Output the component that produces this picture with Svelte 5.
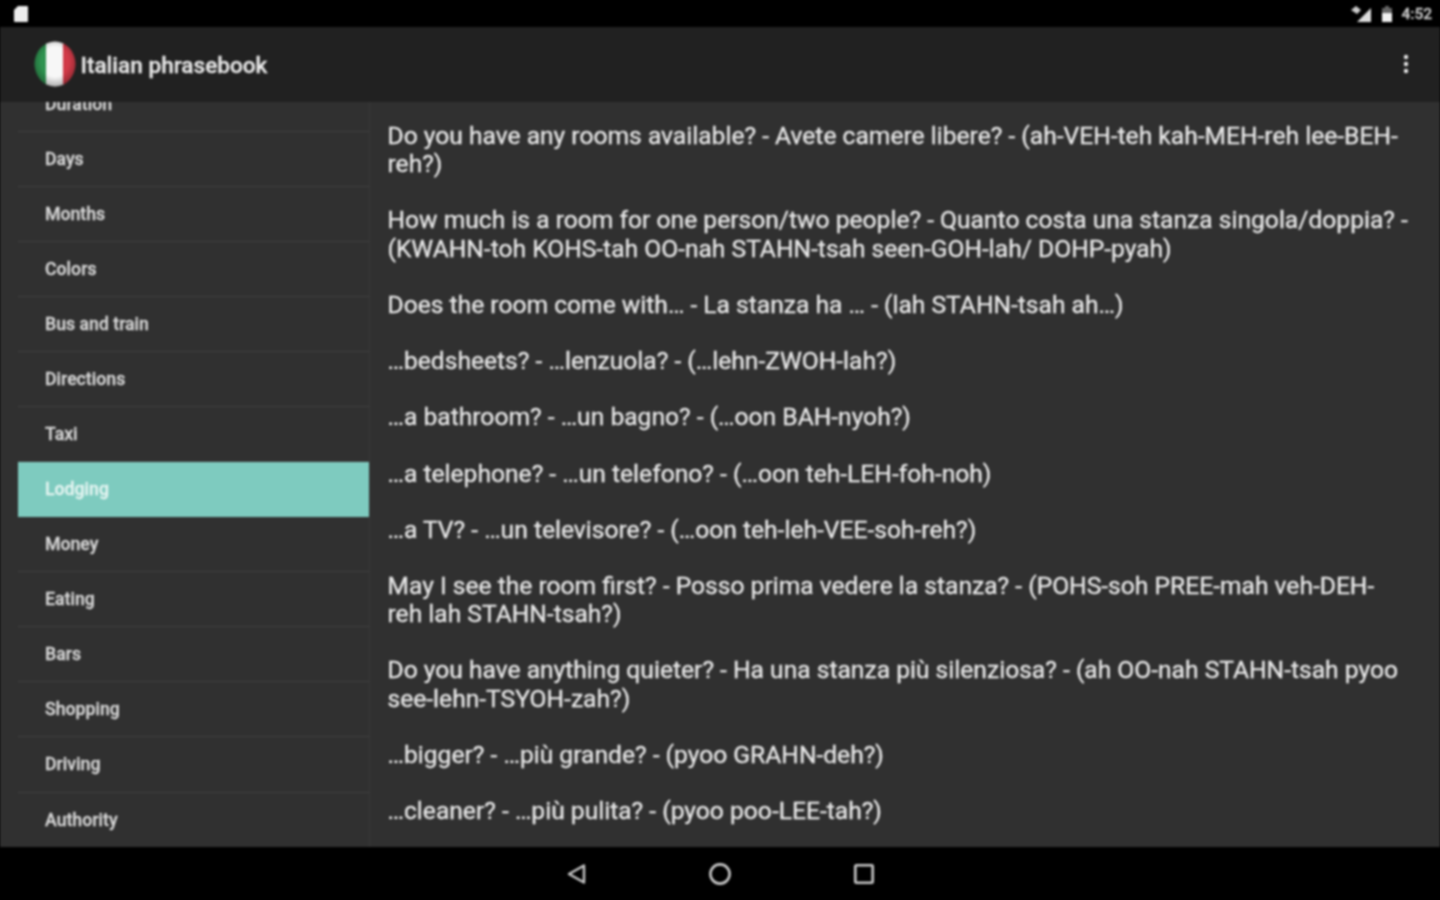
<script lang="ts">
  const topics = ["Duration", "Days", "Months", "Colors", "Bus and train", "Directions", "Taxi", "Lodging", "Money", "Eating", "Bars", "Shopping", "Driving", "Authority"];
  const selected = "Lodging";

  const phrases = [
    "Do you have any rooms available? - Avete camere libere? - (ah-VEH-teh kah-MEH-reh lee-BEH-reh?)",
    "How much is a room for one person/two people? - Quanto costa una stanza singola/doppia? - (KWAHN-toh KOHS-tah OO-nah STAHN-tsah seen-GOH-lah/ DOHP-pyah)",
    "Does the room come with… - La stanza ha … - (lah STAHN-tsah ah…)",
    "…bedsheets? - …lenzuola? - (…lehn-ZWOH-lah?)",
    "…a bathroom? - …un bagno? - (…oon BAH-nyoh?)",
    "…a telephone? - …un telefono? - (…oon teh-LEH-foh-noh)",
    "…a TV? - …un televisore? - (…oon teh-leh-VEE-soh-reh?)",
    "May I see the room first? - Posso prima vedere la stanza? - (POHS-soh PREE-mah veh-DEH-reh lah STAHN-tsah?)",
    "Do you have anything quieter? - Ha una stanza più silenziosa? - (ah OO-nah STAHN-tsah pyoo see-lehn-TSYOH-zah?)",
    "…bigger? - …più grande? - (pyoo GRAHN-deh?)",
    "…cleaner? - …più pulita? - (pyoo poo-LEE-tah?)",
  ];
</script>

<div class="screen">
  <header class="status">
    <svg width="16" height="18" viewBox="0 0 16 18"><path d="M5 1h9a1 1 0 0 1 1 1v14a1 1 0 0 1-1 1H2a1 1 0 0 1-1-1V5z" fill="#eee" /></svg>
    <div class="status-right">
      <svg width="22" height="20" viewBox="0 0 22 20">
        <path d="M0 6l5-4 5 4-4 4z" fill="#ccc" />
        <path d="M20 4v14H6z" fill="#ddd" />
      </svg>
      <svg width="12" height="18" viewBox="0 0 12 18">
        <path d="M4 1h4v2h3v14H1V3h3z" fill="#666" />
        <path d="M1 8h10v9H1z" fill="#f0f0f0" />
      </svg>
      <span class="clock">4:52</span>
    </div>
  </header>

  <div class="appbar">
    <svg class="flag" width="42" height="46" viewBox="0 0 42 46">
      <defs>
        <clipPath id="ball"><ellipse cx="21" cy="23" rx="20.5" ry="22.5" /></clipPath>
        <radialGradient id="shine" cx="50%" cy="45%" r="55%">
          <stop offset="60%" stop-color="#000" stop-opacity="0" />
          <stop offset="100%" stop-color="#000" stop-opacity="0.3" />
        </radialGradient>
      </defs>
      <g clip-path="url(#ball)">
        <rect width="14" height="46" fill="#2f9350" />
        <rect x="12" width="18" height="46" fill="#f7f7f7" />
        <rect x="29" width="13" height="46" fill="#d13a48" />
        <rect width="42" height="46" fill="url(#shine)" />
      </g>
    </svg>
    <h1>Italian phrasebook</h1>
    <svg width="6" height="22" viewBox="0 0 6 22" fill="#e8e8e8">
      <circle cx="3" cy="4" r="2.2" /><circle cx="3" cy="11" r="2.2" /><circle cx="3" cy="18" r="2.2" />
    </svg>
  </div>

  <main class="content">
    <nav class="topics">
      <ul>
        {#each topics as topic}
          <li class:active={topic === selected}>{topic}</li>
        {/each}
      </ul>
    </nav>
    <article class="phrases">
      {#each phrases as phrase}
        <p>{phrase}</p>
      {/each}
    </article>
  </main>

  <footer class="navbar">
    <svg width="24" height="24" viewBox="0 0 24 24" fill="none" stroke="#c8c8c8" stroke-width="2.4" stroke-linejoin="round"><path d="M20 3.5v17L5 12z" /></svg>
    <svg width="24" height="24" viewBox="0 0 24 24" fill="none" stroke="#c8c8c8" stroke-width="2.6"><circle cx="12" cy="12" r="9.6" /></svg>
    <svg width="24" height="24" viewBox="0 0 24 24" fill="none" stroke="#c8c8c8" stroke-width="2.6"><rect x="3.3" y="3.3" width="17.4" height="17.4" rx="1" /></svg>
  </footer>
</div>

<style>
  :global(body) {
    background: #000;
  }

  /* the reference is an upscaled capture, everything is a bit soft */
  .screen {
    width: 1440px;
    height: 900px;
    display: flex;
    flex-direction: column;
    overflow: hidden;
    font-family: Roboto, "Liberation Sans", sans-serif;
    filter: blur(0.8px);
    -webkit-text-stroke: 0.3px currentColor;
  }

  .status {
    height: 27px;
    flex: none;
    background: #000;
    display: flex;
    align-items: center;
    justify-content: space-between;
    padding: 0 8px 0 13px;
    color: #ccc;
  }

  .status-right {
    display: flex;
    align-items: center;
    gap: 8px;
  }

  .clock {
    font-size: 15.5px;
    font-weight: 500;
  }

  .appbar {
    height: 73px;
    flex: none;
    background: #212121;
    display: flex;
    align-items: center;
    padding: 0 31px 2px 33.5px;
  }

  .flag {
    flex: none;
  }

  h1 {
    margin: 3px 0 0 5px;
    font-size: 22.6px;
    font-weight: 500;
    color: #e8e8e8;
    flex: 1;
  }

  .content {
    flex: 1;
    min-height: 0;
    background: #303030;
    display: flex;
  }

  .topics {
    width: 351px;
    flex: none;
    margin-left: 17.5px;
    border-right: 1px solid #3a3a3a;
    overflow: hidden;
  }

  ul {
    list-style: none;
    margin: -25.5px 0 0;
    padding: 0;
  }

  li {
    height: 54.08px;
    line-height: 54px;
    padding-left: 27.5px;
    border-bottom: 1px solid #404040;
    font-size: 17.7px;
    font-weight: 500;
    color: #d8d8d8;
  }

  li.active {
    background: #7ecbbf;
    color: #e6f5f2;
    border-bottom-color: #7ecbbf;
  }

  .phrases {
    flex: 1;
    min-width: 0;
    padding: 20px 32px 0 18px;
    overflow: hidden;
  }

  p {
    margin: 0 0 28.13px;
    font-size: 24.62px;
    line-height: 28.13px;
    font-weight: 400;
    color: #e8e8e8;
  }

  .navbar {
    height: 53px;
    flex: none;
    background: #000;
    display: flex;
    align-items: center;
    justify-content: center;
    gap: 120px;
  }
</style>
